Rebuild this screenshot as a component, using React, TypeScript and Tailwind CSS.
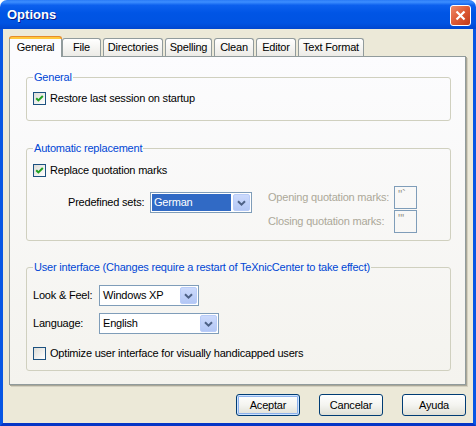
import React from "react";

const tabs = [
    { label: "General", w: "w-[53px]", active: true },
    { label: "File", w: "w-[39px]" },
    { label: "Directories", w: "w-[60px] ml-[2px]" },
    { label: "Spelling", w: "w-[47px] ml-[2px]" },
    { label: "Clean", w: "w-[40px] ml-[2px]" },
    { label: "Editor", w: "w-[40px] ml-[2px]" },
    { label: "Text Format", w: "w-[66px] ml-[2px]" },
];

function CheckBox({ checked }: { checked?: boolean }) {
    return (
        <span className="flex h-[13px] w-[13px] shrink-0 items-center justify-center border border-[#1C5180] bg-gradient-to-br from-[#DCDCD7] to-white">
            {checked && (
                <svg width="9" height="9" viewBox="0 0 9 9">
                    <path d="M1.2 4.2 L3.4 6.4 L7.8 2" stroke="#21A121" strokeWidth="2" fill="none" />
                </svg>
            )}
        </span>
    );
}

function DropButton() {
    return (
        <div className="flex h-[17px] w-[17px] shrink-0 items-center justify-center rounded-[2px] border border-[#B9CCF8] bg-gradient-to-b from-[#CCDAFC] to-[#B3C7F5]">
            <svg width="9" height="6" viewBox="0 0 9 6">
                <path d="M1 1.2 L4.5 4.6 L8 1.2" stroke="#4D6185" strokeWidth="2" fill="none" />
            </svg>
        </div>
    );
}

function Select({ value, width, focused }: { value: string; width: string; focused?: boolean }) {
    return (
        <div className={`flex h-[21px] items-center border border-[#7F9DB9] bg-white p-px ${width}`}>
            <div className={`mr-[2px] flex h-full flex-1 items-center pl-[2px] ${focused ? "bg-[#316AC5] text-white" : ""}`}>
                {value}
            </div>
            <DropButton />
        </div>
    );
}

function Button({ label, primary }: { label: string; primary?: boolean }) {
    return (
        <button
            className={`h-[22px] w-[64px] rounded-[3px] border border-[#003C74] bg-gradient-to-b from-white via-[#F4F4F0] to-[#E0E0D6] text-black ${primary ? "shadow-[inset_0_0_0_1px_#CEE3FF,inset_0_0_0_2px_#8DB2EC]" : ""}`}
        >
            {label}
        </button>
    );
}

export default function App() {
    return (
        <div className="flex h-[426px] w-[476px] flex-col font-['Liberation_Sans',Arial,sans-serif] text-[11px] leading-[13px] tracking-[-0.2px] text-black">
            {/* Title bar */}
            <div className="flex h-[29px] shrink-0 items-start justify-between rounded-t-[7px] bg-[linear-gradient(to_bottom,#2A7BF6_0%,#3D8EFF_7%,#0C60EE_18%,#0055E5_45%,#0053E2_80%,#0046CF_100%)] pl-[7px] pr-[5px]">
                <span className="mt-[8px] text-[13px] font-bold tracking-normal text-white [text-shadow:1px_1px_0_#0A1D8A]">
                    Options
                </span>
                <div className="mt-[5px] flex h-[21px] w-[21px] items-center justify-center rounded-[3px] border border-white bg-gradient-to-br from-[#EE8A68] via-[#DD5A34] to-[#C13A17]">
                    <svg width="11" height="11" viewBox="0 0 11 11">
                        <path d="M1.5 1.5 L9.5 9.5 M9.5 1.5 L1.5 9.5" stroke="white" strokeWidth="2.2" />
                    </svg>
                </div>
            </div>

            {/* Body */}
            <div className="flex flex-1 flex-col border-x-[3px] border-b-[3px] border-x-[#0756E4] border-b-[#0535C6] bg-[#ECE9D8] pl-[6px] pt-[7px]">
                {/* Tabs */}
                <div className="relative z-10 flex h-[20px] items-end">
                    {tabs.map((t) =>
                        t.active ? (
                            <div key={t.label} className={`-mb-px flex h-[21px] flex-col ${t.w}`}>
                                <div className="h-[3px] rounded-t-[3px] border-x border-t border-[#E68B2C] bg-[#FFC83C]" />
                                <div className="flex flex-1 items-center justify-center border-x border-[#919B9C] bg-[#FCFCFE] pb-[2px]">
                                    {t.label}
                                </div>
                            </div>
                        ) : (
                            <div
                                key={t.label}
                                className={`flex h-[18px] items-center justify-center rounded-t-[3px] border-x border-t border-[#919B9C] bg-gradient-to-b from-white to-[#ECEBE6] ${t.w}`}
                            >
                                {t.label}
                            </div>
                        )
                    )}
                </div>

                {/* Tab panel */}
                <div className="flex h-[329px] w-[457px] flex-col border border-[#919B9C] bg-gradient-to-b from-[#FCFCFE] to-[#F4F3EE] pl-[16px] pr-[14px] pt-[14px] shadow-[1px_1px_0_0_#A9A797,2px_2px_0_0_#D4D0C0]">
                    <fieldset className="rounded-[3px] border border-[#D0D0BF] px-[6px] pb-[15px]">
                        <legend className="px-[1px] text-[#0046D5]">General</legend>
                        <label className="mt-[8px] flex items-center gap-[4px]">
                            <CheckBox checked />
                            <span>Restore last session on startup</span>
                        </label>
                    </fieldset>

                    <fieldset className="mt-[21px] rounded-[3px] border border-[#D0D0BF] px-[6px] pb-[7px]">
                        <legend className="px-[1px] text-[#0046D5]">Automatic replacement</legend>
                        <label className="mt-[9px] flex items-center gap-[4px]">
                            <CheckBox checked />
                            <span>Replace quotation marks</span>
                        </label>
                        <div className="mt-[8px] flex items-start">
                            <div className="ml-[35px] mt-[7px] flex items-center">
                                <span className="w-[82px]">Predefined sets:</span>
                                <Select value="German" width="w-[102px]" focused />
                            </div>
                            <div className="ml-[16px] flex flex-col text-[#ACA899]">
                                <div className="flex h-[24px] items-center">
                                    <span className="w-[126px]">Opening quotation marks:</span>
                                    <div className="h-[23px] w-[23px] border border-[#7F9DB9] pl-[3px] pt-[2px] text-[12px] leading-[12px] text-[#9A9A90]">&quot;`</div>
                                </div>
                                <div className="flex h-[24px] items-center">
                                    <span className="w-[126px]">Closing quotation marks:</span>
                                    <div className="h-[23px] w-[23px] border border-[#7F9DB9] pl-[3px] pt-[2px] text-[12px] leading-[12px] text-[#9A9A90]">&quot;'</div>
                                </div>
                            </div>
                        </div>
                    </fieldset>

                    <fieldset className="mt-[20px] rounded-[3px] border border-[#D0D0BF] px-[6px] pb-[10px]">
                        <legend className="px-[1px] text-[#0046D5]">
                            User interface (Changes require a restart of TeXnicCenter to take effect)
                        </legend>
                        <div className="mt-[11px] flex items-center">
                            <span className="w-[66px]">Look &amp; Feel:</span>
                            <Select value="Windows XP" width="w-[100px]" />
                        </div>
                        <div className="mt-[7px] flex items-center">
                            <span className="w-[66px]">Language:</span>
                            <Select value="English" width="w-[120px]" />
                        </div>
                        <label className="mt-[13px] flex items-center gap-[4px]">
                            <CheckBox />
                            <span>Optimize user interface for visually handicapped users</span>
                        </label>
                    </fieldset>
                </div>

                {/* Buttons */}
                <div className="mt-[9px] flex justify-end gap-[19px] pr-[7px]">
                    <Button label="Aceptar" primary />
                    <Button label="Cancelar" />
                    <Button label="Ayuda" />
                </div>
            </div>
        </div>
    );
}
